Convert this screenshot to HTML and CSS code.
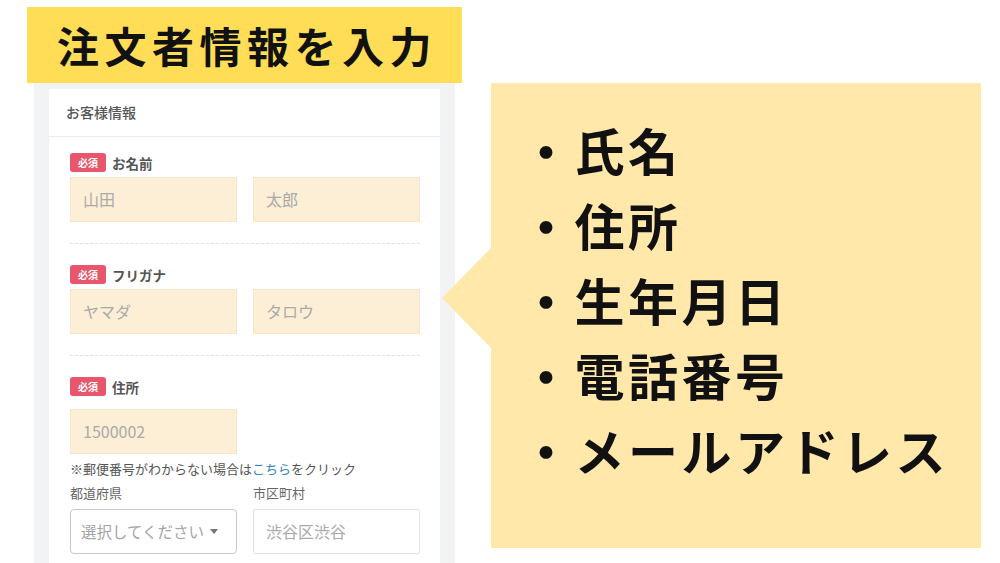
FILE: index.html
```html
<!DOCTYPE html>
<html lang="ja">
<head>
<meta charset="utf-8">
<link rel="stylesheet" href="styles.css">
</head>
<body>
<div class="page">
  <div class="left">
    <h1 class="title">注文者情報を入力</h1>
    <div class="phone">
      <div class="card">
        <div class="card-head">お客様情報</div>
        <div class="card-body">
          <div class="field">
            <div class="label-row"><span class="badge">必須</span><span class="label">お名前</span></div>
            <div class="pair">
              <div class="inp">山田</div>
              <div class="inp">太郎</div>
            </div>
          </div>
          <div class="sep"></div>
          <div class="field">
            <div class="label-row"><span class="badge">必須</span><span class="label">フリガナ</span></div>
            <div class="pair">
              <div class="inp">ヤマダ</div>
              <div class="inp">タロウ</div>
            </div>
          </div>
          <div class="sep"></div>
          <div class="field">
            <div class="label-row"><span class="badge">必須</span><span class="label">住所</span></div>
            <div class="pair zip">
              <div class="inp">1500002</div>
            </div>
            <p class="note">※郵便番号がわからない場合は<span class="link">こちら</span>をクリック</p>
            <div class="pair sub-labels">
              <span class="sub">都道府県</span>
              <span class="sub">市区町村</span>
            </div>
            <div class="pair last">
              <div class="select"><span>選択してください</span><span class="caret"></span></div>
              <div class="inp white">渋谷区渋谷</div>
            </div>
          </div>
        </div>
      </div>
    </div>
  </div>
  <div class="callout">
    <ul class="list">
      <li>・氏名</li>
      <li>・住所</li>
      <li>・生年月日</li>
      <li>・電話番号</li>
      <li>・メールアドレス</li>
    </ul>
  </div>
</div>
</body>
</html>
```
FILE: styles.css
```css
* { box-sizing: border-box; }
html, body { margin: 0; padding: 0; background: #fff; }
body { font-family: "Noto Sans CJK JP", "Noto Sans", sans-serif; }
.page {
  width: 1000px;
  height: 563px;
  overflow: hidden;
  display: flex;
  align-items: flex-start;
}
.left {
  margin-left: 27px;
  width: 435px;
  display: flex;
  flex-direction: column;
}
.title {
  margin: 7px 0 0;
  height: 76px;
  background: #FFDD57;
  color: #111;
  font-size: 42px;
  font-weight: 700;
  letter-spacing: 5.5px;
  text-indent: 5px;
  line-height: 76px;
  text-align: center;
}
.phone {
  margin: 0 7px;
  height: 480px;
  background: #F2F3F5;
  padding: 6px 15px 0 15px;
}
.card {
  background: #fff;
  height: 100%;
}
.card-head {
  height: 48px;
  border-bottom: 1px solid #E9ECEE;
  padding-left: 17px;
  font-size: 14px;
  font-weight: 500;
  line-height: 47px;
  color: #555;
}
.card-body {
  padding: 16px 20px 0 21px;
}
.label-row {
  display: flex;
  align-items: center;
  height: 19px;
  gap: 6px;
}
.badge {
  width: 36px;
  height: 19px;
  border-radius: 3px;
  background: #E8566B;
  color: #fff;
  font-size: 10px;
  font-weight: 700;
  line-height: 19px;
  text-align: center;
}
.label {
  font-size: 13.5px;
  font-weight: 700;
  color: #555;
}
.pair {
  display: grid;
  grid-template-columns: 167px 167px;
  column-gap: 16px;
  margin-top: 5px;
}
.zip { margin-top: 13px; }
.inp {
  height: 45px;
  background: #FDEFD5;
  border: 1px solid #F6E7CC;
  color: #AAA;
  font-size: 16px;
  line-height: 43px;
  padding-left: 12px;
}
.inp.white {
  background: #fff;
  border: 1px solid #E3E3E3;
  border-radius: 2px;
}
.sep {
  border-top: 1px dashed #E2E2E2;
  margin: 21px 0 21px;
}
.note {
  margin: 6px 0 0;
  font-size: 13px;
  line-height: 18px;
  color: #555;
}
.link { color: #3B82C4; }
.sub-labels { margin-top: 6px; }
.sub {
  font-size: 13px;
  line-height: 18px;
  color: #666;
}
.pair.last { margin-top: 7px; }
.select {
  height: 45px;
  border: 1px solid #C9C9C9;
  border-radius: 4px;
  background: #fff;
  color: #A5A5A5;
  font-size: 15.5px;
  line-height: 43px;
  padding-left: 10px;
  display: flex;
  align-items: center;
  gap: 6px;
}
.caret {
  width: 0;
  height: 0;
  border-left: 4px solid transparent;
  border-right: 4px solid transparent;
  border-top: 5px solid #777;
}
.callout {
  position: relative;
  margin: 83px 0 0 29px;
  width: 490px;
  height: 465px;
  background: #FFE8A9;
  padding: 29px 0 0 30px;
}
.callout::before {
  content: "";
  position: absolute;
  left: -49px;
  top: 165px;
  width: 0;
  height: 0;
  border-top: 50px solid transparent;
  border-bottom: 50px solid transparent;
  border-right: 49px solid #FFE8A9;
}
.list {
  list-style: none;
  margin: 0;
  padding: 0;
}
.list li {
  font-size: 50px;
  font-weight: 700;
  line-height: 75px;
  letter-spacing: 3.5px;
  color: #111;
  white-space: nowrap;
}
```
